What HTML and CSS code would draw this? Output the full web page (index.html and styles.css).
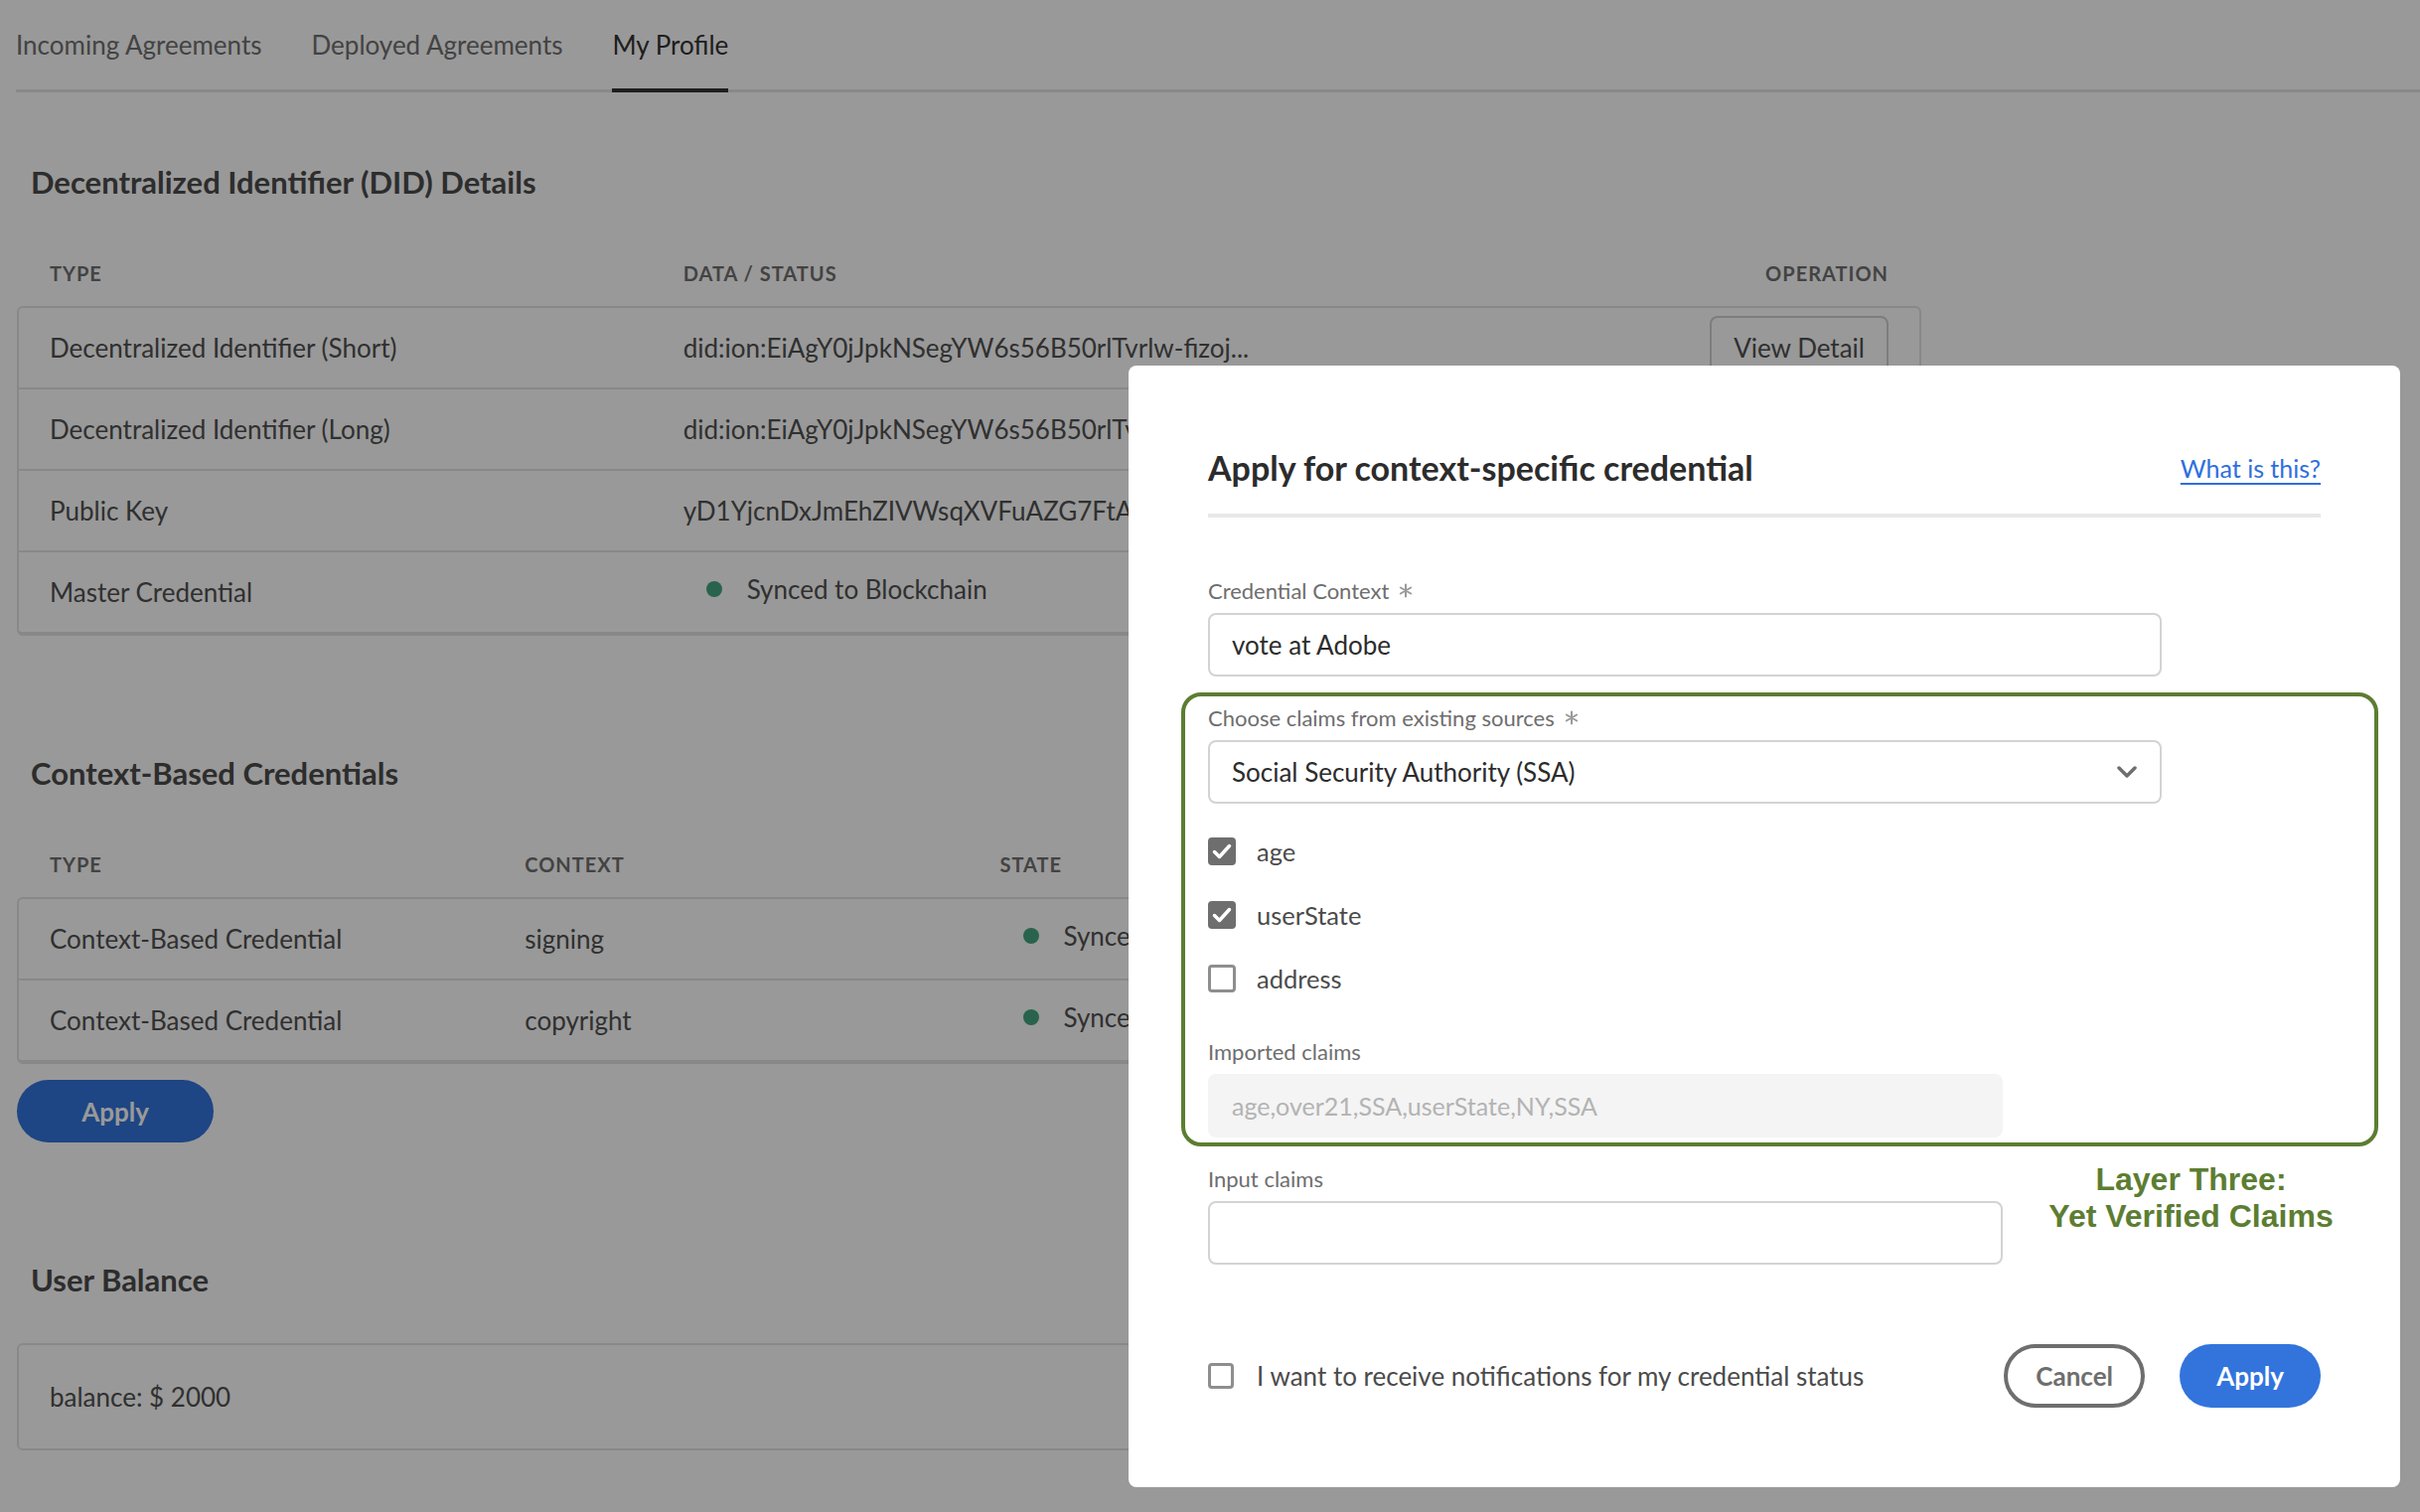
FILE: index.html
```html
<!DOCTYPE html>
<html lang="en">
<head>
<meta charset="utf-8">
<title>My Profile</title>
<link rel="stylesheet" href="styles.css">
</head>
<body>
<div class="page">
  <nav class="tabs">
    <a class="tab">Incoming Agreements</a>
    <a class="tab">Deployed Agreements</a>
    <a class="tab active">My Profile</a>
  </nav>

  <div class="content">
    <section class="section first">
      <h2 class="section-title">Decentralized Identifier (DID) Details</h2>
      <div class="table cols3">
        <div class="thead">
          <div class="th">TYPE</div>
          <div class="th">DATA / STATUS</div>
          <div class="th right">OPERATION</div>
        </div>
        <div class="tbody">
          <div class="tr">
            <div class="td">Decentralized Identifier (Short)</div>
            <div class="td">did:ion:EiAgY0jJpkNSegYW6s56B50rlTvrlw-fizoj...</div>
            <div class="td right"><button class="btn-secondary">View Detail</button></div>
          </div>
          <div class="tr">
            <div class="td">Decentralized Identifier (Long)</div>
            <div class="td">did:ion:EiAgY0jJpkNSegYW6s56B50rlTvrlw-fizoj...</div>
            <div class="td right"><button class="btn-secondary">View Detail</button></div>
          </div>
          <div class="tr">
            <div class="td">Public Key</div>
            <div class="td">yD1YjcnDxJmEhZIVWsqXVFuAZG7FtAhSzQ3k...</div>
            <div class="td right"><button class="btn-secondary">View Detail</button></div>
          </div>
          <div class="tr">
            <div class="td">Master Credential</div>
            <div class="td status-cell"><span class="status"><span class="dot"></span>Synced to Blockchain</span></div>
            <div class="td right"></div>
          </div>
        </div>
      </div>
    </section>

    <section class="section">
      <h2 class="section-title">Context-Based Credentials</h2>
      <div class="table cols4">
        <div class="thead">
          <div class="th">TYPE</div>
          <div class="th">CONTEXT</div>
          <div class="th">STATE</div>
          <div class="th right">OPERATION</div>
        </div>
        <div class="tbody">
          <div class="tr">
            <div class="td">Context-Based Credential</div>
            <div class="td">signing</div>
            <div class="td status-cell"><span class="status"><span class="dot"></span>Synced to Blockchain</span></div>
            <div class="td right"><button class="btn-secondary">View Detail</button></div>
          </div>
          <div class="tr">
            <div class="td">Context-Based Credential</div>
            <div class="td">copyright</div>
            <div class="td status-cell"><span class="status"><span class="dot"></span>Synced to Blockchain</span></div>
            <div class="td right"><button class="btn-secondary">View Detail</button></div>
          </div>
        </div>
      </div>
      <button class="btn-cta page-apply">Apply</button>
    </section>

    <section class="section">
      <h2 class="section-title">User Balance</h2>
      <div class="card">balance: $ 2000</div>
    </section>
  </div>
</div>

<div class="underlay"></div>

<div class="modal" role="dialog">
  <div class="modal-head">
    <h1 class="modal-title">Apply for context-specific credential</h1>
    <a class="link">What is this?</a>
  </div>
  <div class="divider"></div>

  <div class="field">
    <div class="field-label">Credential Context
      <svg class="req" width="14" height="15" viewBox="0 0 14 15"><path d="M7 1.5V13.5M1.8 4.5L12.2 10.5M1.8 10.5L12.2 4.5" stroke="#9a9a9a" stroke-width="2" stroke-linecap="round"/></svg>
    </div>
    <div class="input">vote at Adobe</div>
  </div>

  <div class="claims-group">
    <div class="field">
      <div class="field-label">Choose claims from existing sources
        <svg class="req" width="14" height="15" viewBox="0 0 14 15"><path d="M7 1.5V13.5M1.8 4.5L12.2 10.5M1.8 10.5L12.2 4.5" stroke="#9a9a9a" stroke-width="2" stroke-linecap="round"/></svg>
      </div>
      <div class="input select">
        <span>Social Security Authority (SSA)</span>
        <svg class="chevron" width="20" height="12" viewBox="0 0 20 12"><path d="M2 2L10 10L18 2" fill="none" stroke="#6e6e6e" stroke-width="3.5" stroke-linecap="round" stroke-linejoin="round"/></svg>
      </div>
    </div>

    <div class="checks">
      <label class="check-row"><span class="box checked"><svg width="28" height="28" viewBox="0 0 28 28"><path d="M6.5 14.5L11.5 19.5L21.5 8.5" fill="none" stroke="#fff" stroke-width="3.5" stroke-linecap="round" stroke-linejoin="round"/></svg></span>age</label>
      <label class="check-row"><span class="box checked"><svg width="28" height="28" viewBox="0 0 28 28"><path d="M6.5 14.5L11.5 19.5L21.5 8.5" fill="none" stroke="#fff" stroke-width="3.5" stroke-linecap="round" stroke-linejoin="round"/></svg></span>userState</label>
      <label class="check-row"><span class="box"></span>address</label>
    </div>

    <div class="field spaced">
      <div class="field-label">Imported claims</div>
      <div class="input narrow disabled">age,over21,SSA,userState,NY,SSA</div>
    </div>
  </div>

  <div class="field spaced annotated">
    <div class="field-label">Input claims</div>
    <div class="input narrow"></div>
    <div class="annotation">Layer Three:<br>Yet Verified Claims</div>
  </div>

  <div class="modal-foot">
    <label class="check-row foot-check"><span class="box small"></span>I want to receive notifications for my credential status</label>
    <div class="actions">
      <button class="btn-outline">Cancel</button>
      <button class="btn-cta">Apply</button>
    </div>
  </div>
</div>
</body>
</html>
```

FILE: styles.css
```css
* { box-sizing: border-box; }

html, body {
  margin: 0;
  padding: 0;
}

body {
  width: 2436px;
  height: 1522px;
  overflow: hidden;
  background: #ffffff;
  font-family: Lato, "Liberation Sans", "DejaVu Sans", sans-serif;
  font-size: 26px;
  color: #4b4b4b;
}

/* ---------- page under the dialog ---------- */
.page {
  padding-left: 16px;
}

.tabs {
  display: flex;
  gap: 50px;
  height: 93px;
  border-bottom: 3px solid #e4e4e4;
}

.tab {
  height: 93px;
  margin-bottom: -3px;
  display: flex;
  align-items: center;
  border-bottom: 4px solid transparent;
  color: #707070;
  font-size: 26px;
}

.tab.active {
  color: #323232;
  border-bottom-color: #323232;
}

.content {
  margin-left: 1px;
  width: 1917px;
}

.section-title {
  margin: 120px 0 40px 14px;
  font-size: 31px;
  line-height: 36px;
  font-weight: 700;
  color: #4b4b4b;
}

.section.first .section-title {
  margin-top: 72px;
}

.thead,
.tr {
  display: grid;
  align-items: center;
}

.cols3 .thead,
.cols3 .tr { grid-template-columns: repeat(3, 1fr); }

.cols4 .thead,
.cols4 .tr { grid-template-columns: repeat(4, 1fr); }

.thead {
  height: 67px;
  padding: 0 2px;
}

.th {
  padding: 0 31px;
  font-size: 20px;
  font-weight: 700;
  letter-spacing: 1px;
  color: #707070;
}

.right { text-align: right; justify-self: stretch; }

.tbody {
  border: 2px solid #e3e3e3;
  border-bottom-width: 4px;
  border-radius: 6px;
}

.tr {
  height: 80px;
}

.tr + .tr {
  border-top: 2px solid #e3e3e3;
  height: 82px;
}

.td {
  padding: 0 31px;
  white-space: nowrap;
  overflow: hidden;
  color: #505050;
}

.td.right {
  display: flex;
  justify-content: flex-end;
}

.status-cell {
  overflow: visible;
}

.status {
  display: inline-flex;
  align-items: center;
  gap: 25px;
  padding-left: 23px;
  transform: translateY(-4px);
}

.dot {
  width: 16px;
  height: 16px;
  border-radius: 50%;
  background: #45a680;
  flex: none;
}

.btn-secondary {
  height: 64px;
  min-width: 179px;
  padding: 0 22px;
  border: 2px solid #d0d0d0;
  border-radius: 8px;
  background: #ffffff;
  font-family: inherit;
  font-size: 26px;
  color: #505050;
}

.btn-cta {
  height: 64px;
  min-width: 142px;
  padding: 0 28px;
  border: none;
  border-radius: 32px;
  background: #3274dc;
  color: #ffffff;
  font-family: inherit;
  font-size: 26px;
  font-weight: 700;
}

.page-apply {
  margin-top: 16px;
  min-width: 198px;
  height: 63px;
}

.card {
  margin-top: 46px;
  height: 108px;
  border: 2px solid #e3e3e3;
  border-radius: 6px;
  display: flex;
  align-items: center;
  padding-left: 31px;
  color: #505050;
}

/* ---------- dialog ---------- */
.underlay {
  position: fixed;
  inset: 0;
  background: rgba(0, 0, 0, 0.4);
}

.modal {
  position: fixed;
  left: 1136px;
  top: 368px;
  width: 1280px;
  background: #ffffff;
  border-radius: 8px;
  padding: 83px 80px 80px;
  color: #2c2c2c;
}

.modal-head {
  display: flex;
  justify-content: space-between;
  align-items: center;
  height: 40px;
  margin-bottom: 26px;
}

.modal-title {
  margin: 0;
  font-size: 34px;
  line-height: 40px;
  font-weight: 700;
  color: #2c2c2c;
}

.link {
  font-size: 25px;
  color: #2f6fdd;
  text-decoration: underline;
  text-decoration-thickness: 2px;
  text-underline-offset: 5px;
}

.divider {
  height: 4px;
  background: #e8e8e8;
  margin-bottom: 58px;
}

.field-label {
  display: flex;
  align-items: center;
  gap: 10px;
  height: 30px;
  margin-bottom: 8px;
  font-size: 22px;
  color: #6e6e6e;
}

.input {
  width: 960px;
  height: 64px;
  border: 2px solid #d3d3d3;
  border-radius: 8px;
  padding: 0 22px;
  display: flex;
  align-items: center;
  font-size: 26px;
  color: #2c2c2c;
}

.input.narrow { width: 800px; }

.input.disabled {
  background: #f4f4f4;
  border-color: #f4f4f4;
  color: #b3b3b3;
  font-size: 25px;
}

.select {
  justify-content: space-between;
  padding-right: 23px;
}

.claims-group {
  position: relative;
  margin-top: 26px;
}

.claims-group::before {
  content: "";
  position: absolute;
  top: -10px;
  left: -27px;
  right: -58px;
  bottom: -9px;
  border: 4px solid #5c7d32;
  border-radius: 20px;
  pointer-events: none;
}

.checks {
  margin-top: 16px;
}

.check-row {
  display: flex;
  align-items: center;
  gap: 21px;
  height: 64px;
  font-size: 25.5px;
  color: #4b4b4b;
}

.box {
  width: 28px;
  height: 28px;
  border: 3px solid #8e8e8e;
  border-radius: 4px;
  flex: none;
}

.box.checked {
  border: none;
  background: #6e6e6e;
}

.box svg { display: block; }

.box.small {
  width: 26px;
  height: 26px;
}

.field.spaced { margin-top: 26px; }

.annotated { position: relative; }

.annotation {
  position: absolute;
  top: -2px;
  left: 801px;
  width: 377px;
  text-align: center;
  font-family: "Liberation Sans", Arial, sans-serif;
  font-weight: 700;
  font-size: 32px;
  line-height: 37px;
  color: #5c7d32;
}

.modal-foot {
  margin-top: 80px;
  height: 64px;
  display: flex;
  align-items: center;
  justify-content: space-between;
}

.foot-check {
  font-size: 26px;
  gap: 23px;
}

.actions {
  display: flex;
  gap: 35px;
}

.btn-outline {
  height: 64px;
  min-width: 141px;
  padding: 0 28px;
  border: 4px solid #6e6e6e;
  border-radius: 32px;
  background: #ffffff;
  color: #6e6e6e;
  font-family: inherit;
  font-size: 26px;
  font-weight: 700;
}
```
